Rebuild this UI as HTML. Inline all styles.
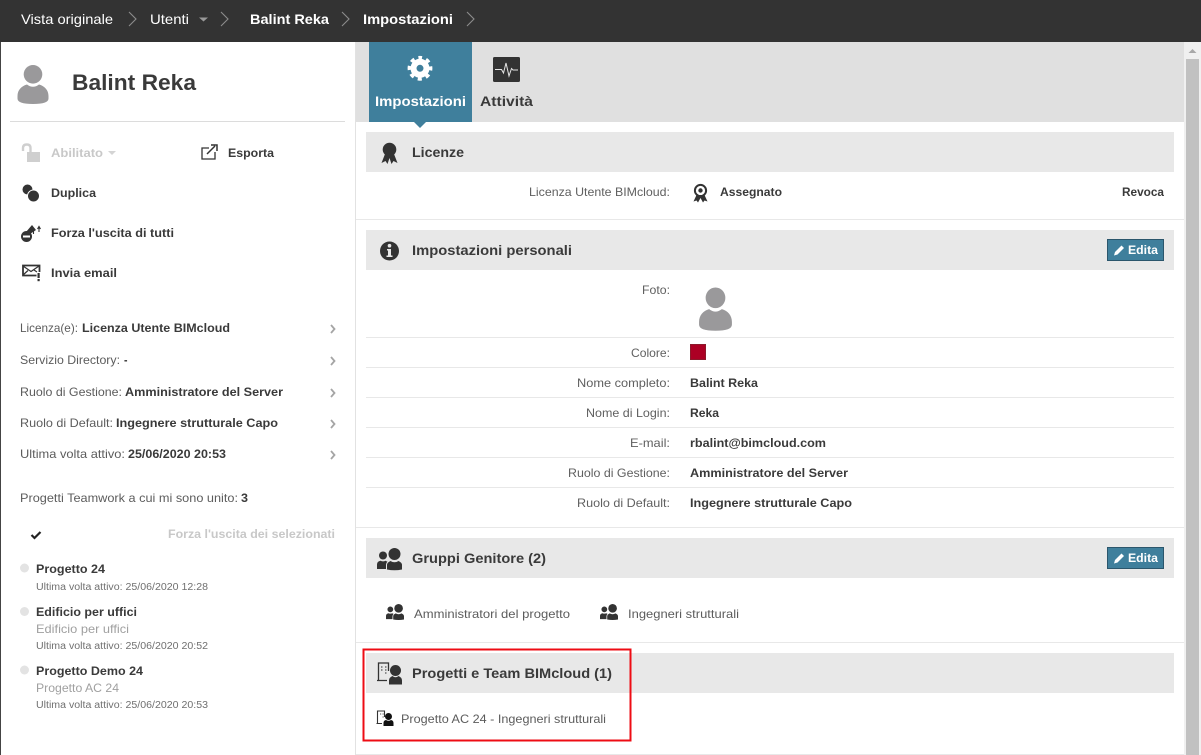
<!DOCTYPE html>
<html lang="it"><head><meta charset="utf-8"><title>Balint Reka - Impostazioni</title>
<style>
html,body{margin:0;padding:0;width:1201px;height:755px;overflow:hidden;background:#fff}
svg{display:block}
text{font-family:"Liberation Sans",sans-serif;font-size:12px;fill:#5c5c5c}
.b{font-weight:700;fill:#3a3a3a}
.bc{font-size:14px;fill:#fff}
.h{font-size:14px;font-weight:700;fill:#3a3a3a}
.s{font-size:10px;fill:#707070}
.g{fill:#a0a0a0}
.d{font-weight:700;fill:#c8c8c8}
.r{fill:#606060}
</style></head><body>
<svg xmlns="http://www.w3.org/2000/svg" width="1201" height="755" viewBox="0 0 1201 755">
<defs>
<g id="av"><circle cx="16.500" cy="9.300" r="9.300" fill="#9a999b"/><path fill="#9a999b" d="M10.500 19.500Q16.500 24 22.500 19.500C28 21 32 25 32 31V33.500Q32 39 16.500 39Q1 39 1 33.500V31C1 25 5 21 10.500 19.500Z"/></g>
<g id="grp" fill="#333"><circle cx="6" cy="7.500" r="4"/><path d="M0 21V16.500Q0 13.500 3.500 12.800Q6 14 8.500 12.800L10.500 13.800Q9 15 9 17.500V21Z"/><circle cx="17.500" cy="6" r="6"/><path d="M10 21.500V17Q10 14.500 13.500 13Q17.500 15.500 21.500 13Q25 14.500 25 17V21.500Q17.500 23 10 21.500Z"/></g>
<g id="chev"><path d="M0 0L7 7L0 14" fill="none" stroke="#8c8c8c" stroke-width="1.100"/></g>
<g id="sch"><path d="M0 0L3.500 4L0 8" fill="none" stroke="#a5a5a5" stroke-width="1.800"/></g>
<g id="edit"><rect x=".5" y=".5" width="56" height="21" fill="#3f7f9c" stroke="#2b566c"/><path d="M7 16.500L8 13L14.500 6.500L17 9L10.500 15.500Z" fill="#fff"/></g>
</defs>

<rect width="1201" height="42" fill="#333"/>
<rect x="0" y="42" width="1" height="713" fill="#444"/>
<rect x="355" y="42" width="1" height="713" fill="#e2e2e2"/>
<rect x="1184" y="42" width="17" height="713" fill="#f0f0f0"/>
<rect x="1186" y="59" width="13" height="696" fill="#c1c1c1"/>
<path d="M1188.500 53L1192.500 49L1196.500 53Z" fill="#a8a8a8"/>

<text lengthAdjust="spacingAndGlyphs" class="bc" x="21" y="24" textLength="92">Vista originale</text>
<use href="#chev" x="129" y="12"/>
<text lengthAdjust="spacingAndGlyphs" class="bc" x="150" y="24" textLength="39">Utenti</text>
<path d="M199 17.500H208L203.500 21.500Z" fill="#999"/>
<use href="#chev" x="221" y="12"/>
<text lengthAdjust="spacingAndGlyphs" class="bc" x="250" y="24" textLength="79" style="font-weight:700">Balint Reka</text>
<use href="#chev" x="342" y="12"/>
<text lengthAdjust="spacingAndGlyphs" class="bc" x="363" y="24" textLength="90" style="font-weight:700">Impostazioni</text>
<use href="#chev" x="467" y="12"/>

<use href="#av" x="16.500" y="65"/>
<text lengthAdjust="spacingAndGlyphs" x="72" y="90" textLength="124" style="font-size:22px;font-weight:700;fill:#3a3a3a">Balint Reka</text>
<rect x="10" y="121" width="335" height="1" fill="#dcdcdc"/>

<path d="M23 151V148Q23 144.500 26.800 144.500Q30.500 144.500 30.500 148V152" fill="none" stroke="#cfcfcf" stroke-width="2.400"/>
<rect x="27" y="152" width="13" height="10" fill="#cfcfcf"/>
<text lengthAdjust="spacingAndGlyphs" class="d" x="51" y="157" textLength="52">Abilitato</text>
<path d="M108 151H116L112 155Z" fill="#d4d4d4"/>
<path d="M209 148H202V159H215V152" fill="none" stroke="#333" stroke-width="1.300"/>
<path d="M207 154L215 146M211 145H217V151" fill="none" stroke="#333" stroke-width="1.500"/>
<text lengthAdjust="spacingAndGlyphs" class="b" x="228" y="157" textLength="46">Esporta</text>

<circle cx="27.500" cy="189.500" r="5" fill="#333"/><circle cx="33.500" cy="196" r="6" fill="#333" stroke="#fff" stroke-width="1"/>
<text lengthAdjust="spacingAndGlyphs" class="b" x="51" y="197" textLength="45">Duplica</text>

<path d="M26 232L32 225L36 230L30 234Z" fill="#333"/>
<circle cx="26.500" cy="236.500" r="5.500" fill="#333"/><rect x="23" y="235.500" width="7" height="2" fill="#fff"/>
<path d="M37.500 229L39 226.500L40.500 229M39 227V232M33.500 230V234" fill="none" stroke="#333" stroke-width="1.100"/>
<text lengthAdjust="spacingAndGlyphs" class="b" x="51" y="237" textLength="123">Forza l'uscita di tutti</text>

<path d="M36.500 275.500H23V265.500H39.500V272" fill="none" stroke="#333" stroke-width="1.800"/>
<path d="M23 266L31 271.500L39 266M23 275L28 270.500M37 272L34 270" fill="none" stroke="#333" stroke-width="1.200"/>
<rect x="37.500" y="273" width="2.200" height="5" fill="#333"/><rect x="37.500" y="279" width="2.200" height="2.200" fill="#333"/>
<text lengthAdjust="spacingAndGlyphs" class="b" x="51" y="277" textLength="66">Invia email</text>

<text lengthAdjust="spacingAndGlyphs" x="20" y="332" textLength="58">Licenza(e):</text><text lengthAdjust="spacingAndGlyphs" class="b" x="82" y="332" textLength="148">Licenza Utente BIMcloud</text>
<text lengthAdjust="spacingAndGlyphs" x="20" y="364" textLength="100">Servizio Directory:</text><text lengthAdjust="spacingAndGlyphs" class="b" x="124" y="364" textLength="3.500">-</text>
<text lengthAdjust="spacingAndGlyphs" x="20" y="396" textLength="102">Ruolo di Gestione:</text><text lengthAdjust="spacingAndGlyphs" class="b" x="125" y="396" textLength="158">Amministratore del Server</text>
<text lengthAdjust="spacingAndGlyphs" x="20" y="427" textLength="93">Ruolo di Default:</text><text lengthAdjust="spacingAndGlyphs" class="b" x="116" y="427" textLength="162">Ingegnere strutturale Capo</text>
<text lengthAdjust="spacingAndGlyphs" x="20" y="458" textLength="105">Ultima volta attivo:</text><text lengthAdjust="spacingAndGlyphs" class="b" x="128" y="458" textLength="98">25/06/2020 20:53</text>
<use href="#sch" x="331" y="325"/><use href="#sch" x="331" y="357"/><use href="#sch" x="331" y="389"/><use href="#sch" x="331" y="420"/><use href="#sch" x="331" y="451"/>
<text lengthAdjust="spacingAndGlyphs" x="20" y="502" textLength="218">Progetti Teamwork a cui mi sono unito:</text><text lengthAdjust="spacingAndGlyphs" class="b" x="241" y="502" textLength="7">3</text>
<path d="M31.500 535L34.500 538L40.500 532" fill="none" stroke="#222" stroke-width="2.200"/>
<text lengthAdjust="spacingAndGlyphs" class="d" x="168" y="538" textLength="167">Forza l'uscita dei selezionati</text>
<circle cx="24.500" cy="568" r="4.500" fill="#e3e3e3"/><circle cx="24.500" cy="611.500" r="4.500" fill="#e3e3e3"/><circle cx="24.500" cy="670" r="4.500" fill="#e3e3e3"/>
<text lengthAdjust="spacingAndGlyphs" class="b" x="36" y="573" textLength="69">Progetto 24</text>
<text lengthAdjust="spacingAndGlyphs" class="s" x="36" y="590" textLength="172">Ultima volta attivo: 25/06/2020 12:28</text>
<text lengthAdjust="spacingAndGlyphs" class="b" x="36" y="616" textLength="101">Edificio per uffici</text>
<text lengthAdjust="spacingAndGlyphs" class="g" x="36" y="633" textLength="93">Edificio per uffici</text>
<text lengthAdjust="spacingAndGlyphs" class="s" x="36" y="649" textLength="172">Ultima volta attivo: 25/06/2020 20:52</text>
<text lengthAdjust="spacingAndGlyphs" class="b" x="36" y="675" textLength="107">Progetto Demo 24</text>
<text lengthAdjust="spacingAndGlyphs" class="g" x="36" y="692" textLength="83">Progetto AC 24</text>
<text lengthAdjust="spacingAndGlyphs" class="s" x="36" y="708" textLength="172">Ultima volta attivo: 25/06/2020 20:53</text>

<rect x="356" y="42" width="828" height="80" fill="#e0e0e0"/>
<rect x="369" y="42" width="103" height="80" fill="#3f7f9c"/>
<path d="M414 122H426L420 128Z" fill="#3f7f9c"/>
<circle cx="420" cy="68.300" r="6.500" fill="none" stroke="#fff" stroke-width="6"/>
<circle cx="420" cy="68.300" r="10.600" fill="none" stroke="#fff" stroke-width="3.600" stroke-dasharray="4.100 4.230" stroke-dashoffset="2.050" transform="rotate(-90 420 68.300)"/>
<text lengthAdjust="spacingAndGlyphs" x="375" y="106" textLength="91" style="font-size:14px;font-weight:700;fill:#fff">Impostazioni</text>
<rect x="493" y="57" width="27" height="25" rx="1.500" fill="#333"/>
<path d="M495 69.500H501.500L503.500 73L506 63L509 76L511.500 68.500L513 70H518" fill="none" stroke="#e4e4e4" stroke-width="1"/>
<text lengthAdjust="spacingAndGlyphs" class="h" x="480" y="106" textLength="53">Attività</text>

<rect x="366" y="132" width="808" height="40" fill="#e8e8e8"/>
<circle cx="389.500" cy="149.500" r="6.800" fill="#333"/>
<path d="M385 154L381.500 163L385.500 161L387.500 164L389.500 158L391.500 164L393.500 161L397.500 163L394 154Z" fill="#333"/>
<text lengthAdjust="spacingAndGlyphs" class="h" x="412" y="157" textLength="52">Licenze</text>
<text lengthAdjust="spacingAndGlyphs" class="r" x="529" y="196" textLength="141">Licenza Utente BIMcloud:</text>
<circle cx="700.500" cy="190.500" r="5.600" fill="none" stroke="#333" stroke-width="2"/><circle cx="700.500" cy="190.500" r="2.200" fill="#333"/>
<path d="M696.500 195L693.500 201.500L696.500 200.500L698 202.500L700.500 198L703 202.500L704.500 200.500L707.500 201.500L704.500 195Z" fill="#333"/>
<text lengthAdjust="spacingAndGlyphs" class="b" x="720" y="196" textLength="62">Assegnato</text>
<text lengthAdjust="spacingAndGlyphs" class="b" x="1122" y="196" textLength="42">Revoca</text>
<rect x="356" y="219" width="828" height="1" fill="#e8e8e8"/>

<rect x="366" y="230" width="808" height="40" fill="#e8e8e8"/>
<circle cx="389.500" cy="251" r="9.500" fill="#333"/>
<circle cx="389.500" cy="245.700" r="1.800" fill="#e8e8e8"/><path d="M387 249H391V255.500H392.500V257H386.500V255.500H388V250.500H387Z" fill="#e8e8e8"/>
<text lengthAdjust="spacingAndGlyphs" class="h" x="412" y="255" textLength="160">Impostazioni personali</text>
<use href="#edit" x="1107" y="239"/>
<text lengthAdjust="spacingAndGlyphs" x="1128" y="254" textLength="30" style="font-weight:700;fill:#fff">Edita</text>

<text lengthAdjust="spacingAndGlyphs" class="r" x="642" y="294" textLength="28">Foto:</text>
<g transform="translate(698 287.500) scale(1.060 1.110)"><use href="#av"/></g>
<rect x="366" y="337" width="808" height="1" fill="#e8e8e8"/>
<text lengthAdjust="spacingAndGlyphs" class="r" x="631" y="357" textLength="39">Colore:</text>
<rect x="690.500" y="344.500" width="15" height="15" fill="#ac0024" stroke="#8c1a2c"/>
<rect x="366" y="367" width="808" height="1" fill="#e8e8e8"/>
<text lengthAdjust="spacingAndGlyphs" class="r" x="577" y="387" textLength="93">Nome completo:</text><text lengthAdjust="spacingAndGlyphs" class="b" x="690" y="387" textLength="68">Balint Reka</text>
<rect x="366" y="397" width="808" height="1" fill="#e8e8e8"/>
<text lengthAdjust="spacingAndGlyphs" class="r" x="586" y="417" textLength="84">Nome di Login:</text><text lengthAdjust="spacingAndGlyphs" class="b" x="690" y="417" textLength="29">Reka</text>
<rect x="366" y="427" width="808" height="1" fill="#e8e8e8"/>
<text lengthAdjust="spacingAndGlyphs" class="r" x="630" y="447" textLength="40">E-mail:</text><text lengthAdjust="spacingAndGlyphs" class="b" x="690" y="447" textLength="136">rbalint@bimcloud.com</text>
<rect x="366" y="457" width="808" height="1" fill="#e8e8e8"/>
<text lengthAdjust="spacingAndGlyphs" class="r" x="568" y="477" textLength="102">Ruolo di Gestione:</text><text lengthAdjust="spacingAndGlyphs" class="b" x="690" y="477" textLength="158">Amministratore del Server</text>
<rect x="366" y="487" width="808" height="1" fill="#e8e8e8"/>
<text lengthAdjust="spacingAndGlyphs" class="r" x="577" y="507" textLength="93">Ruolo di Default:</text><text lengthAdjust="spacingAndGlyphs" class="b" x="690" y="507" textLength="162">Ingegnere strutturale Capo</text>
<rect x="356" y="527" width="828" height="1" fill="#e8e8e8"/>

<rect x="366" y="538" width="808" height="40" fill="#e8e8e8"/>
<use href="#grp" x="377" y="548"/>
<text lengthAdjust="spacingAndGlyphs" class="h" x="412" y="563" textLength="134">Gruppi Genitore (2)</text>
<use href="#edit" x="1107" y="547"/>
<text lengthAdjust="spacingAndGlyphs" x="1128" y="562" textLength="30" style="font-weight:700;fill:#fff">Edita</text>
<g transform="translate(386 604) scale(.72)"><use href="#grp"/></g>
<text lengthAdjust="spacingAndGlyphs" x="414" y="618" textLength="156">Amministratori del progetto</text>
<g transform="translate(600 604) scale(.72)"><use href="#grp"/></g>
<text lengthAdjust="spacingAndGlyphs" x="628" y="618" textLength="111">Ingegneri strutturali</text>
<rect x="356" y="642" width="828" height="1" fill="#e8e8e8"/>

<rect x="366" y="653" width="808" height="40" fill="#e8e8e8"/>
<path d="M378.500 680V663H388.500V671M377 680.500H387" fill="none" stroke="#333" stroke-width="1.300"/>
<path d="M381 667h1.500M385 667h1.500M385 670h1.500M385 673h1.500M381 670h1.500" stroke="#555" stroke-width="1.200"/>
<circle cx="395.500" cy="670.500" r="5.500" fill="#333"/><path d="M389 684.500V680.500Q389 677.500 392.500 676Q395.500 678.500 398.500 676Q402 677.500 402 680.500V684.500Z" fill="#333"/>
<text lengthAdjust="spacingAndGlyphs" class="h" x="412" y="678" textLength="200">Progetti e Team BIMcloud (1)</text>
<path d="M377.500 723V711H384.500V717M376.500 723.500H382" fill="none" stroke="#333" stroke-width="1.100"/>
<path d="M380 714h1.200M382.500 714h1.200M382.500 717h1.200" stroke="#555" stroke-width="1"/>
<circle cx="388.500" cy="716.500" r="3.500" fill="#111"/><path d="M383.500 726V723Q383.500 720.500 386 720Q388.500 721.500 391 720Q393.500 720.500 393.500 723V726Z" fill="#111"/>
<text lengthAdjust="spacingAndGlyphs" x="401" y="723" textLength="205">Progetto AC 24 - Ingegneri strutturali</text>
<rect x="356" y="754" width="828" height="1" fill="#e8e8e8"/>

<rect x="363.500" y="649.500" width="267" height="91" fill="none" stroke="#ee0c14" stroke-width="2"/>
</svg>
</body></html>
